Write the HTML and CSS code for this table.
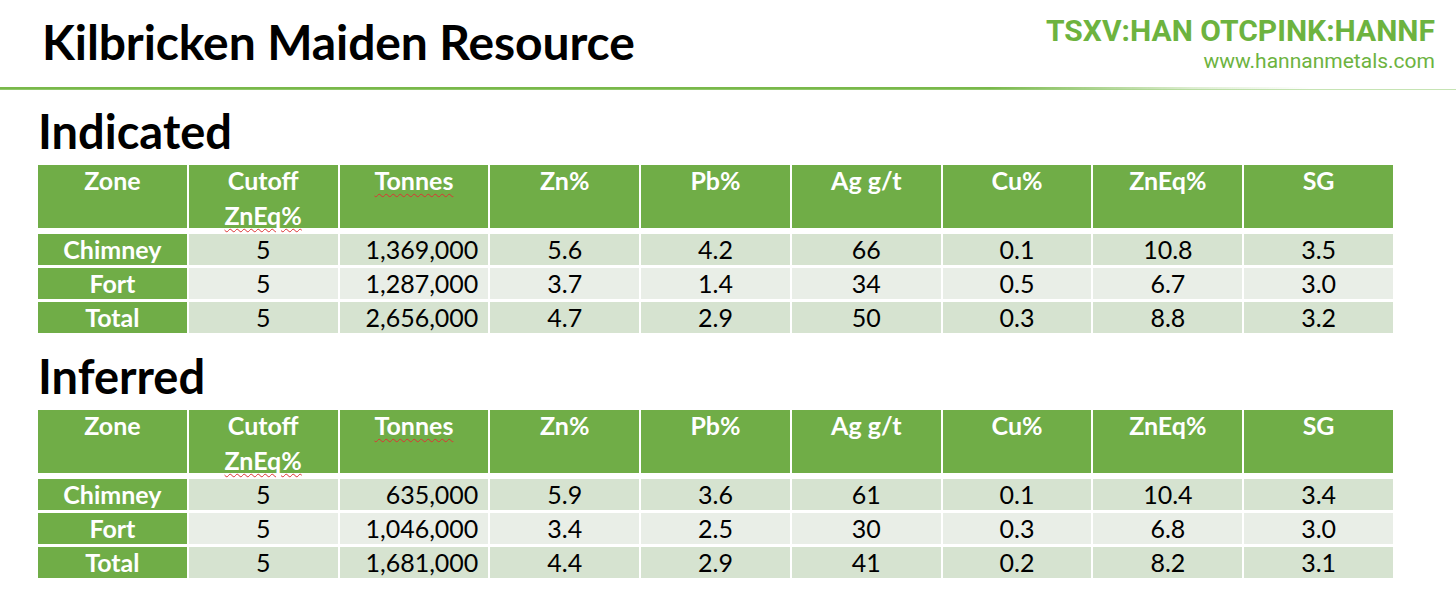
FILE: index.html
```html
<!DOCTYPE html>
<html>
<head>
<meta charset="utf-8">
<link rel="stylesheet" href="styles.css">
</head>
<body>
<header class="top">
  <h1 class="title">Kilbricken Maiden Resource</h1>
  <div class="brand">
    <div class="ticker">TSXV:HAN OTCPINK:HANNF</div>
    <div class="url">www.hannanmetals.com</div>
  </div>
</header>
<div class="rule"></div>

<section class="sec sec1">
  <h2 class="sec-title">Indicated</h2>
  <div class="tbl">
    <div class="row head">
      <div class="c"><span class="ht">Zone</span></div>
      <div class="c"><span class="ht">Cutoff<br><span class="sp">ZnEq%</span></span></div>
      <div class="c"><span class="ht"><span class="sp">Tonnes</span></span></div>
      <div class="c"><span class="ht">Zn%</span></div>
      <div class="c"><span class="ht">Pb%</span></div>
      <div class="c"><span class="ht">Ag g/t</span></div>
      <div class="c"><span class="ht">Cu%</span></div>
      <div class="c"><span class="ht">ZnEq%</span></div>
      <div class="c"><span class="ht">SG</span></div>
    </div>
    <div class="row odd">
      <div class="c z">Chimney</div><div class="c">5</div><div class="c r">1,369,000</div><div class="c">5.6</div><div class="c">4.2</div><div class="c">66</div><div class="c">0.1</div><div class="c">10.8</div><div class="c">3.5</div>
    </div>
    <div class="row even">
      <div class="c z">Fort</div><div class="c">5</div><div class="c r">1,287,000</div><div class="c">3.7</div><div class="c">1.4</div><div class="c">34</div><div class="c">0.5</div><div class="c">6.7</div><div class="c">3.0</div>
    </div>
    <div class="row odd">
      <div class="c z">Total</div><div class="c">5</div><div class="c r">2,656,000</div><div class="c">4.7</div><div class="c">2.9</div><div class="c">50</div><div class="c">0.3</div><div class="c">8.8</div><div class="c">3.2</div>
    </div>
  </div>
</section>

<section class="sec sec2">
  <h2 class="sec-title">Inferred</h2>
  <div class="tbl">
    <div class="row head">
      <div class="c"><span class="ht">Zone</span></div>
      <div class="c"><span class="ht">Cutoff<br><span class="sp">ZnEq%</span></span></div>
      <div class="c"><span class="ht"><span class="sp">Tonnes</span></span></div>
      <div class="c"><span class="ht">Zn%</span></div>
      <div class="c"><span class="ht">Pb%</span></div>
      <div class="c"><span class="ht">Ag g/t</span></div>
      <div class="c"><span class="ht">Cu%</span></div>
      <div class="c"><span class="ht">ZnEq%</span></div>
      <div class="c"><span class="ht">SG</span></div>
    </div>
    <div class="row odd">
      <div class="c z">Chimney</div><div class="c">5</div><div class="c r">635,000</div><div class="c">5.9</div><div class="c">3.6</div><div class="c">61</div><div class="c">0.1</div><div class="c">10.4</div><div class="c">3.4</div>
    </div>
    <div class="row even">
      <div class="c z">Fort</div><div class="c">5</div><div class="c r">1,046,000</div><div class="c">3.4</div><div class="c">2.5</div><div class="c">30</div><div class="c">0.3</div><div class="c">6.8</div><div class="c">3.0</div>
    </div>
    <div class="row odd">
      <div class="c z">Total</div><div class="c">5</div><div class="c r">1,681,000</div><div class="c">4.4</div><div class="c">2.9</div><div class="c">41</div><div class="c">0.2</div><div class="c">8.2</div><div class="c">3.1</div>
    </div>
  </div>
</section>
</body>
</html>
```

FILE: styles.css
```css
* { box-sizing: border-box; }
html, body { margin: 0; padding: 0; background: #ffffff; }
body {
  width: 1456px;
  height: 600px;
  overflow: hidden;
  font-family: Lato, "Open Sans", sans-serif;
  color: #000;
}
.top {
  display: flex;
  justify-content: space-between;
  align-items: flex-start;
  height: 87px;
  padding: 0 21px 0 42px;
}
.title {
  margin: 14px 0 0 0;
  font-family: Lato, sans-serif;
  font-weight: 700;
  font-size: 48px;
  line-height: 56px;
  letter-spacing: -0.1px;
}
.brand {
  display: flex;
  flex-direction: column;
  align-items: flex-end;
  padding-top: 14px;
  font-family: Roboto, sans-serif;
}
.ticker {
  font-weight: 700;
  font-size: 30px;
  line-height: 34px;
  color: #6db33f;
}
.url {
  font-size: 21px;
  line-height: 24px;
  color: #6db33f;
  margin-top: 1px;
}
.rule {
  height: 3px;
  width: 100%;
  background: linear-gradient(to right, #79b84a 0%, #79b84a 68%, rgba(121,184,74,0.25) 82%, rgba(121,184,74,0) 90%);
  border-bottom: 1px solid rgba(160, 210, 130, 0.6);
}
.sec { padding-left: 38px; }
.sec1 { padding-top: 21px; }
.sec2 { padding-top: 23px; }
.sec-title {
  margin: 0;
  font-family: Lato, sans-serif;
  font-weight: 700;
  font-size: 47px;
  line-height: 40px;
  height: 54px;
}
.tbl {
  width: 1355px;
  display: flex;
  flex-direction: column;
  gap: 3px;
}
.row {
  display: grid;
  grid-template-columns: repeat(9, 1fr);
  column-gap: 2px;
}
.c {
  text-align: center;
  font-size: 25px;
  height: 31px;
  line-height: 31px;
  white-space: nowrap;
}
.head { margin-bottom: 3px; }
.head .c {
  background: #70ad47;
  color: #fff;
  font-weight: 700;
  font-size: 25px;
  height: 63px;
  line-height: 35px;
}
.ht {
  display: block;
  margin-top: -2px;
}
.odd .c { background: #d6e3d0; }
.even .c { background: #e9eee7; }
.row .c.z {
  background: #70ad47;
  color: #fff;
  font-weight: 700;
}
.c.r { text-align: right; padding-right: 10px; }
.sp {
  text-decoration: underline wavy #d33;
  text-decoration-thickness: 1px;
  text-underline-offset: 3px;
}
```
